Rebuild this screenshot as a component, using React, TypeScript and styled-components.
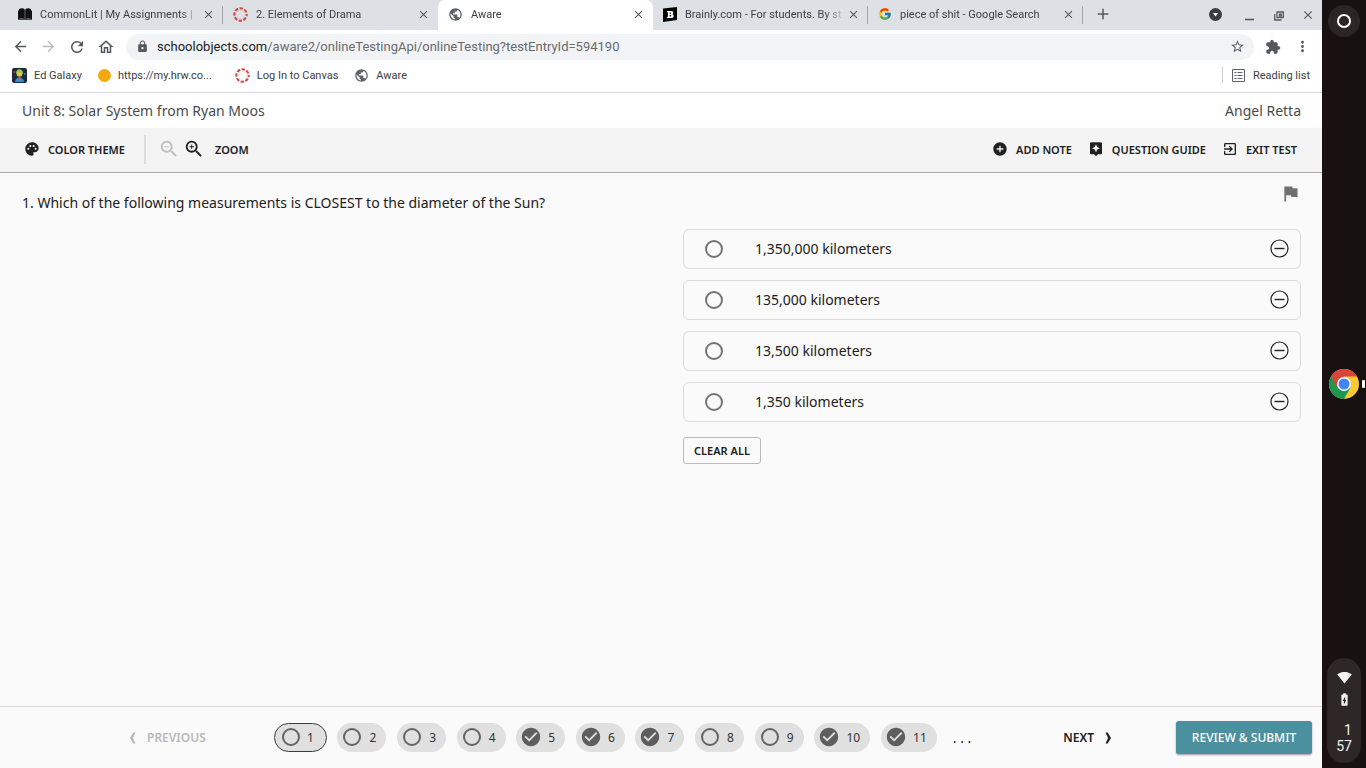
import React from 'react';
import styled, { createGlobalStyle, css } from 'styled-components';
import {
  MdAddCircle,
  MdArrowBack,
  MdArrowForward,
  MdAssistant,
  MdBatteryChargingFull,
  MdCheckCircle,
  MdClose,
  MdExitToApp,
  MdFlag,
  MdLock,
  MdMoreVert,
  MdPalette,
  MdPublic,
  MdRefresh,
  MdSignalWifi4Bar,
  MdStarBorder,
  MdZoomIn,
  MdZoomOut,
  MdAdd,
  MdOutlineHome,
} from 'react-icons/md';
import { FcGoogle } from 'react-icons/fc';

const GlobalStyle = createGlobalStyle`
  *, *::before, *::after { box-sizing: border-box; }
  body { margin: 0; background: #fafafa; }
  button, input { font: inherit; color: inherit; margin: 0; }
  button { padding: 0; border: 0; background: none; display: inline-flex; align-items: center; cursor: pointer; }
  svg { display: block; flex: none; }
  h1, p, ol, ul, fieldset { margin: 0; padding: 0; border: 0; }
`;

const uiFont = css`font-family: Roboto, "Liberation Sans", sans-serif;`;
const pageFont = css`font-family: "Noto Sans", "Open Sans", sans-serif;`;

const Screen = styled.div`
  display: flex;
  min-height: 100vh;
`;

const Browser = styled.div`
  flex: 1;
  min-width: 0;
  display: flex;
  flex-direction: column;
`;

/* Tab strip */
const TabStrip = styled.header`
  ${uiFont}
  display: flex;
  align-items: center;
  height: 30px;
  padding-left: 8px;
  background: #dde0e4;
  color: #3c4043;
  font-size: 11px;
`;

const Tab = styled.div<{ $active?: boolean; $divider?: boolean }>`
  flex: 0 1 215px;
  min-width: 0;
  align-self: stretch;
  display: flex;
  align-items: center;
  padding: 0 8px 2px 10px;
  border-radius: 7px 7px 0 0;
  background: ${p => (p.$active ? '#fff' : 'linear-gradient(#9fa3a8, #9fa3a8) no-repeat right 6px')};
  background-size: ${p => (p.$active ? 'auto' : p.$divider ? '1px 18px' : '0 0')};
`;

const TabTitle = styled.span`
  flex: 1;
  min-width: 0;
  margin: 0 2px 0 8px;
  overflow: hidden;
  white-space: nowrap;
  mask-image: linear-gradient(to right, #000 calc(100% - 20px), transparent);
`;

const IconButton = styled.button<{ $dim?: boolean }>`
  justify-content: center;
  color: ${p => (p.$dim ? '#b9bbbe' : '#55585c')};
`;

const NewTab = styled(IconButton)`
  margin-left: 11px;
  padding-bottom: 2px;
`;

const WindowControls = styled.div`
  display: flex;
  align-items: center;
  gap: 16px;
  margin-left: auto;
  padding-right: 7px;
`;

const TabSearch = styled(IconButton)`
  margin-right: 5px;
  padding-bottom: 2px;
`;

/* Address bar */
const NavBar = styled.div`
  ${uiFont}
  display: flex;
  align-items: center;
  height: 33px;
  padding: 0 11px 0 12px;
  background: #fff;
`;

const NavButtons = styled.div`
  display: flex;
  gap: 11px;
`;

const Omnibox = styled.div`
  flex: 1;
  display: flex;
  align-items: center;
  height: 26px;
  margin: 0 11px;
  padding: 0 9px 0 10px;
  border-radius: 13px;
  background: #f1f3f4;
  color: #55585c;
`;

const Address = styled.p`
  flex: 1;
  margin-left: 8px;
  font-size: 13px;
  color: #686c70;
`;

const Host = styled.span`
  color: #202124;
`;

const NavActions = styled.div`
  display: flex;
  align-items: center;
  gap: 13px;
`;

const Bookmarks = styled.nav`
  ${uiFont}
  display: flex;
  align-items: center;
  height: 30px;
  padding: 0 12px 5px;
  border-bottom: 1px solid #d9dbdd;
  background: #fff;
  font-size: 11px;
  color: #3c4043;
`;

const Bookmark = styled.a<{ $gap?: number }>`
  display: flex;
  align-items: center;
  gap: 7px;
  margin-right: ${p => p.$gap ?? 16}px;
  color: inherit;
  text-decoration: none;
  white-space: nowrap;
`;

const Dot = styled.span`
  width: 13px;
  height: 13px;
  border-radius: 50%;
  background: #f2a90f;
`;

const ReadingList = styled.button`
  gap: 8px;
  margin-left: auto;
  padding-left: 9px;
  height: 16px;
  border-left: 1px solid #cfd1d4;
`;

/* Test page */
const TitleBar = styled.div`
  ${pageFont}
  display: flex;
  align-items: center;
  justify-content: space-between;
  height: 35px;
  padding: 0 21px 0 22px;
  background: #fff;
  color: #4a4a4a;
  font-size: 14px;
`;

const Title = styled.h1`
  font-size: 14px;
  font-weight: 400;
`;

const ToolBar = styled.div`
  ${pageFont}
  display: flex;
  align-items: center;
  height: 45px;
  padding: 0 25px 2px 24px;
  border-bottom: 1px solid #a9a9a9;
  box-shadow: 0 1px 2px rgba(0, 0, 0, 0.15);
  background: #f4f4f4;
  color: #202020;
  font-size: 11px;
  font-weight: 600;
`;

const ToolButton = styled.button`
  gap: 8px;
  white-space: nowrap;
`;

const ZoomTools = styled.div`
  display: flex;
  align-items: center;
  height: 29px;
  margin-left: 19px;
  padding-left: 12px;
  border-left: 2px solid #dedede;
`;

const ZoomButton = styled.button`
  margin-right: 3px;
  &:disabled { color: #bdbdbd; }
`;

const ZoomLabel = styled.span`
  margin-left: 7px;
`;

const ToolGroup = styled.div`
  display: flex;
  gap: 16px;
  margin-left: auto;
`;

const Main = styled.main`
  ${pageFont}
  flex: 1;
  display: grid;
  grid-template-columns: 1fr 1fr;
  align-content: start;
  column-gap: 43px;
  padding: 10px 21px 0 22px;
  background: #fafafa;
  color: #202020;
  font-size: 14px;
`;

const QuestionRow = styled.div`
  grid-column: 1 / -1;
  display: flex;
  justify-content: space-between;
  align-items: flex-start;
  height: 46px;
`;

const Question = styled.p`
  padding-top: 10px;
  line-height: 20px;
`;

const FlagButton = styled.button`
  color: #707070;
`;

const Answers = styled.fieldset`
  grid-column: 2;
  min-width: 0;
  display: flex;
  flex-direction: column;
  align-items: flex-start;
  gap: 11px;
`;

const Answer = styled.div`
  width: 100%;
  display: flex;
  align-items: center;
  height: 40px;
  padding: 0 11px 1px 21px;
  border: 1px solid #dadada;
  border-radius: 6px;
`;

const AnswerLabel = styled.label`
  flex: 1;
  display: flex;
  align-items: center;
  gap: 32px;
`;

const Radio = styled.input`
  appearance: none;
  width: 18px;
  height: 18px;
  border: 2px solid #747474;
  border-radius: 50%;
  &:checked { box-shadow: inset 0 0 0 3px #fafafa; background: #4b909e; }
`;

const ClearAll = styled.button`
  justify-content: center;
  width: 78px;
  height: 27px;
  margin-top: 4px;
  border: 1px solid #bababa;
  border-radius: 3px;
  font-size: 11px;
  font-weight: 600;
`;

const Footer = styled.footer`
  ${pageFont}
  display: flex;
  align-items: center;
  height: 62px;
  padding: 0 10px 0 129px;
  border-top: 1px solid #d8d8d8;
  background: #fafafa;
  color: #202020;
  font-size: 12px;
  font-weight: 600;
`;

const StepButton = styled.button`
  gap: 11px;
  &:disabled { color: #b9b9b9; }
`;

const Pager = styled.ol`
  display: flex;
  justify-content: space-between;
  flex: 0 1 663px;
  margin-left: 68px;
  list-style: none;
  font-size: 12px;
  font-weight: 400;
`;

const PagerButton = styled.button<{ $current?: boolean; $wide?: boolean }>`
  justify-content: space-between;
  width: ${p => (p.$wide ? 56 : p.$current ? 53 : 49)}px;
  height: 29px;
  padding: ${p => (p.$current ? '0 12px 0 7px' : '0 10px 0 6px')};
  border: ${p => (p.$current ? '1px solid #3c3c3c' : '0')};
  border-radius: 15px;
  background: #e0e0e0;
  color: #333;
`;

const Ring = styled.span`
  width: 18px;
  height: 18px;
  border: 2px solid #646464;
  border-radius: 50%;
`;

const Check = styled(MdCheckCircle)`
  margin: 0 -2px;
  color: #5e5e5e;
`;

const More = styled.span`
  margin-left: 16px;
  font-size: 14px;
  font-weight: 400;
`;

const NextButton = styled(StepButton)`
  margin-left: auto;
`;

const Submit = styled.button`
  justify-content: center;
  width: 136px;
  height: 33px;
  margin-left: 64px;
  border-radius: 3px;
  background: #4b909e;
  color: #fff;
  font-weight: 500;
  box-shadow: 0 1px 2px rgba(0, 0, 0, 0.4);
  white-space: nowrap;
`;

/* System shelf */
const Shelf = styled.aside`
  ${uiFont}
  flex: none;
  width: 44px;
  display: grid;
  grid-template-rows: 1fr auto 1fr;
  justify-items: center;
  padding: 5px 0;
  background: #171211;
`;

const Launcher = styled.button`
  justify-content: center;
  width: 32px;
  height: 32px;
  border-radius: 50%;
  background: #2b2625;
`;

const LauncherRing = styled.span`
  width: 14px;
  height: 14px;
  border: 2px solid #fff;
  border-radius: 50%;
`;

const ShelfApp = styled.button`
  width: 100%;
  justify-content: space-between;
  padding: 0 1px 0 7px;
`;

const Running = styled.span`
  width: 3px;
  height: 8px;
  border-radius: 1px;
  background: #fff;
`;

const Status = styled.button`
  align-self: end;
  flex-direction: column;
  width: 34px;
  height: 105px;
  padding-top: 12px;
  border-radius: 17px;
  background: #2d2827;
  color: #f1f3f4;
  font-size: 14px;
`;

const StatusIcons = styled.span`
  display: grid;
  justify-items: center;
  gap: 7px;
`;

const Clock = styled.span`
  margin-top: 15px;
  text-align: right;
  line-height: 16px;
`;

const CanvasLogo = () => (
  <svg width="15" height="15" viewBox="0 0 16 16">
    <circle cx="8" cy="8" r="6.6" fill="none" stroke="#d64541" strokeWidth="2.2" strokeDasharray="3.6 1.58" strokeDashoffset="1.8" />
    <circle cx="8" cy="8" r="4.6" fill="none" stroke="#e8908b" strokeWidth="0.9" strokeDasharray="1 2.61" strokeDashoffset="0.5" />
  </svg>
);

const BookLogo = () => (
  <svg width="14" height="14" viewBox="0 0 14 14">
    <path d="M1 2C3.400 1 5.600 1.200 6.800 2.400V12C5 11.200 2.500 11.300 0 12V3.500H1ZM13 2C10.600 1 8.400 1.200 7.200 2.400V12C9 11.200 11.500 11.300 14 12V3.500H13Z" fill="#111" />
    <path d="M0 12.400h14" stroke="#111" strokeWidth=".8" />
  </svg>
);

const BrainlyLogo = () => (
  <svg width="14" height="15" viewBox="0 0 14 15">
    <path d="M0 1.500L14 0v13L0 15Z" fill="#000" />
    <path d="M4 4h4.200c2.400 0 2.700 2.600 1.100 3.200 2.200.6 1.700 3.700-.8 3.800H4V9.700h.9V5.300H4ZM6.700 5.400v1.300h.8c.9 0 .9-1.300 0-1.300ZM6.700 8.100v1.500h.9c1 0 1-1.500 0-1.500Z" fill="#fff" fillRule="evenodd" />
  </svg>
);

const GalaxyLogo = () => (
  <svg width="15" height="15" viewBox="0 0 15 15">
    <rect width="15" height="15" rx="2" fill="#1c2940" />
    <circle cx="2.500" cy="4" r="1" fill="#b8473a" />
    <circle cx="12.800" cy="6" r="1" fill="#397bc0" />
    <path d="M4 5c0-5 7-5 7 0l-.6 1.500H4.600Z" fill="#9acb3c" />
    <rect x="5" y="4.500" width="5" height="4" rx="1.500" fill="#e8bd52" />
    <path d="M3 14c0-6 9-6 9 0Z" fill="#2f8fc4" />
    <path d="M6.500 9h2L8 14H7Z" fill="#e05a3a" />
  </svg>
);

const PuzzleIcon = () => (
  <svg width="16" height="16" viewBox="0 0 24 24" fill="currentColor">
    <path d="M20.5 11H19V7c0-1.100-.9-2-2-2h-4V3.500a2.500 2.500 0 0 0-5 0V5H4c-1.100 0-2 .9-2 2v3.800h1.500c1.490 0 2.700 1.210 2.700 2.700s-1.210 2.700-2.700 2.700H2V20c0 1.100.9 2 2 2h3.800v-1.500c0-1.490 1.210-2.700 2.700-2.700s2.700 1.210 2.700 2.700V22H17c1.100 0 2-.9 2-2v-4h1.500a2.500 2.500 0 0 0 0-5Z" />
  </svg>
);

const ListIcon = () => (
  <svg width="13" height="13" viewBox="0 0 13 13" stroke="#5f6368" fill="none">
    <path d="M.5.5h12v12H.5ZM2.500 3.500h2M5.500 3.500h5M2.500 6.500h2M5.500 6.500h5M2.500 9.500h2M5.500 9.500h5" />
  </svg>
);

const DropIcon = () => (
  <svg width="13" height="13" viewBox="0 0 13 13">
    <circle cx="6.500" cy="6.500" r="6.500" fill="#3a3d41" />
    <path d="M4 5h5L6.500 8.500Z" fill="#fff" />
  </svg>
);

const MinimizeIcon = () => (
  <svg width="13" height="13" viewBox="0 0 13 13">
    <path d="M2 10.500h9" stroke="#55585c" strokeWidth="1.600" />
  </svg>
);

const RestoreIcon = () => (
  <svg width="13" height="13" viewBox="0 0 13 13" fill="none" stroke="#55585c" strokeWidth="1.300">
    <path d="M5 3h6.300v5.500H5ZM2.700 5v6h6.800M7.500 5.200h1.800v1.600H7.500Z" />
  </svg>
);

const MinusIcon = () => (
  <svg width="19" height="19" viewBox="0 0 19 19" fill="none" stroke="#222">
    <circle cx="9.500" cy="9.500" r="8.500" strokeWidth="1.200" />
    <path d="M4.500 9.500h10" strokeWidth="1.400" />
  </svg>
);

const Chevron = ({ left }: { left?: boolean }) => (
  <svg width="7" height="12" viewBox="0 0 7 12" fill="currentColor">
    <path d={left ? 'M4.300.5H6.500L3.900 6l2.600 5.500H4.300L1 6Z' : 'M2.700.5H.5L3.100 6 .5 11.500h2.200L6 6Z'} />
  </svg>
);

const ChromeLogo = () => (
  <svg width="30" height="30" viewBox="0 0 30 30">
    <circle cx="15" cy="15" r="15" fill="#fbc934" />
    <path d="M15 15L2 7.500A15 15 0 0 0 15 30L21.500 18.700Z" fill="#21964f" />
    <path d="M2 7.500A15 15 0 0 1 28 7.500H15L8.500 18.700Z" fill="#d9453a" />
    <circle cx="15" cy="15" r="7" fill="#fff" />
    <circle cx="15" cy="15" r="5.500" fill="#4285f4" />
  </svg>
);

const tabs = [
  { title: 'CommonLit | My Assignments |', icon: <BookLogo />, divider: true },
  { title: '2. Elements of Drama', icon: <CanvasLogo /> },
  { title: 'Aware', icon: <MdPublic size={15} color="#5f6368" />, active: true },
  { title: 'Brainly.com - For students. By st', icon: <BrainlyLogo />, divider: true },
  { title: 'piece of shit - Google Search', icon: <FcGoogle size={14} />, divider: true },
];

const answers = ['1,350,000 kilometers', '135,000 kilometers', '13,500 kilometers', '1,350 kilometers'];

const answered = [5, 6, 7, 10, 11];
const questions = [1, 2, 3, 4, 5, 6, 7, 8, 9, 10, 11];

export default function App() {
  return (
    <Screen>
      <GlobalStyle />
      <Browser>
        <TabStrip>
          {tabs.map(t => (
            <Tab key={t.title} $active={t.active} $divider={t.divider}>
              {t.icon}
              <TabTitle>{t.title}</TabTitle>
              <IconButton aria-label="Close tab"><MdClose size={13} /></IconButton>
            </Tab>
          ))}
          <NewTab aria-label="New tab"><MdAdd size={18} /></NewTab>
          <WindowControls>
            <TabSearch aria-label="Search tabs"><DropIcon /></TabSearch>
            <IconButton aria-label="Minimize"><MinimizeIcon /></IconButton>
            <IconButton aria-label="Restore"><RestoreIcon /></IconButton>
            <IconButton aria-label="Close window"><MdClose size={14} /></IconButton>
          </WindowControls>
        </TabStrip>

        <NavBar>
          <NavButtons>
            <IconButton aria-label="Back"><MdArrowBack size={17} /></IconButton>
            <IconButton aria-label="Forward" $dim><MdArrowForward size={17} /></IconButton>
            <IconButton aria-label="Reload"><MdRefresh size={18} /></IconButton>
            <IconButton aria-label="Home"><MdOutlineHome size={18} /></IconButton>
          </NavButtons>
          <Omnibox>
            <MdLock size={13} />
            <Address><Host>schoolobjects.com</Host>/aware2/onlineTestingApi/onlineTesting?testEntryId=594190</Address>
            <IconButton aria-label="Bookmark this page"><MdStarBorder size={15} /></IconButton>
          </Omnibox>
          <NavActions>
            <IconButton aria-label="Extensions"><PuzzleIcon /></IconButton>
            <IconButton aria-label="Menu"><MdMoreVert size={17} /></IconButton>
          </NavActions>
        </NavBar>

        <Bookmarks>
          <Bookmark href="#"><GalaxyLogo />Ed Galaxy</Bookmark>
          <Bookmark href="#" $gap={23}><Dot />https://my.hrw.co...</Bookmark>
          <Bookmark href="#"><CanvasLogo />Log In to Canvas</Bookmark>
          <Bookmark href="#"><MdPublic size={15} color="#5f6368" />Aware</Bookmark>
          <ReadingList><ListIcon />Reading list</ReadingList>
        </Bookmarks>

        <TitleBar>
          <Title>Unit 8: Solar System from Ryan Moos</Title>
          <span>Angel Retta</span>
        </TitleBar>

        <ToolBar>
          <ToolButton><MdPalette size={16} />COLOR THEME</ToolButton>
          <ZoomTools>
            <ZoomButton disabled aria-label="Zoom out"><MdZoomOut size={22} /></ZoomButton>
            <ZoomButton aria-label="Zoom in"><MdZoomIn size={22} /></ZoomButton>
            <ZoomLabel>ZOOM</ZoomLabel>
          </ZoomTools>
          <ToolGroup>
            <ToolButton><MdAddCircle size={16} />ADD NOTE</ToolButton>
            <ToolButton><MdAssistant size={16} />QUESTION GUIDE</ToolButton>
            <ToolButton><MdExitToApp size={16} />EXIT TEST</ToolButton>
          </ToolGroup>
        </ToolBar>

        <Main>
          <QuestionRow>
            <Question>1. Which of the following measurements is CLOSEST to the diameter of the Sun?</Question>
            <FlagButton aria-label="Flag question"><MdFlag size={21} /></FlagButton>
          </QuestionRow>
          <Answers>
            {answers.map((a, i) => (
              <Answer key={a}>
                <AnswerLabel htmlFor={`answer-${i}`}>
                  <Radio type="radio" name="answer" id={`answer-${i}`} />
                  {a}
                </AnswerLabel>
                <button aria-label={`Eliminate ${a}`}><MinusIcon /></button>
              </Answer>
            ))}
            <ClearAll>CLEAR ALL</ClearAll>
          </Answers>
        </Main>

        <Footer>
          <StepButton disabled><Chevron left />PREVIOUS</StepButton>
          <Pager>
            {questions.map(n => (
              <li key={n}>
                <PagerButton $current={n === 1} $wide={n > 9}>
                  {answered.includes(n) ? <Check size={22} /> : <Ring />}
                  {n}
                </PagerButton>
              </li>
            ))}
          </Pager>
          <More>. . .</More>
          <NextButton>NEXT<Chevron /></NextButton>
          <Submit>REVIEW &amp; SUBMIT</Submit>
        </Footer>
      </Browser>

      <Shelf>
        <Launcher aria-label="Launcher"><LauncherRing /></Launcher>
        <ShelfApp aria-label="Chrome"><ChromeLogo /><Running /></ShelfApp>
        <Status aria-label="Status tray">
          <StatusIcons>
            <MdSignalWifi4Bar size={15} />
            <MdBatteryChargingFull size={15} />
          </StatusIcons>
          <Clock>1<br />57</Clock>
        </Status>
      </Shelf>
    </Screen>
  );
}
